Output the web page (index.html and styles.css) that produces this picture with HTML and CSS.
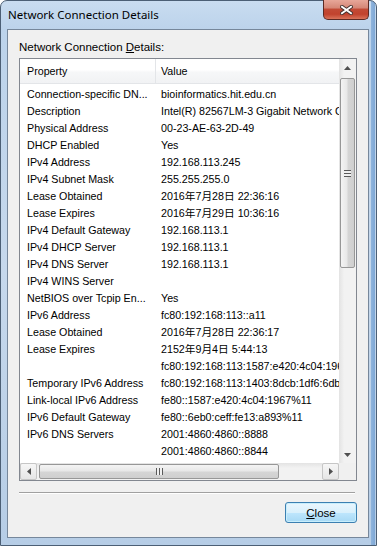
FILE: index.html
```html
<!DOCTYPE html>
<html lang="en">
<head>
  <meta charset="UTF-8" />
  <title>Network Connection Details</title>
  <link rel="stylesheet" href="styles.css">
</head>
<body>

<div class="window">
  <div class="titlebar">
    <span class="title">Network Connection Details</span>
    <div class="close-x">
      <svg width="13" height="10" viewBox="0 0 13 10">
        <path d="M2 1.8 L11 8.2 M11 1.8 L2 8.2" stroke="#43302d" stroke-width="3.8" stroke-linecap="square"/>
        <path d="M2 1.8 L11 8.2 M11 1.8 L2 8.2" stroke="#ffffff" stroke-width="2" stroke-linecap="square"/>
      </svg>
    </div>
  </div>

  <div class="client">
    <div class="caption">Network Connection <u>D</u>etails:</div>

    <div class="listview">
      <div class="list-body">
        <div class="list-head">
          <div class="col-prop">Property</div>
          <div class="col-val">Value</div>
        </div>
        <div class="row"><div class="col-prop">Connection-specific DN...</div><div class="col-val">bioinformatics.hit.edu.cn</div></div>
        <div class="row"><div class="col-prop">Description</div><div class="col-val">Intel(R) 82567LM-3 Gigabit Network Connection</div></div>
        <div class="row"><div class="col-prop">Physical Address</div><div class="col-val">00-23-AE-63-2D-49</div></div>
        <div class="row"><div class="col-prop">DHCP Enabled</div><div class="col-val">Yes</div></div>
        <div class="row"><div class="col-prop">IPv4 Address</div><div class="col-val">192.168.113.245</div></div>
        <div class="row"><div class="col-prop">IPv4 Subnet Mask</div><div class="col-val">255.255.255.0</div></div>
        <div class="row"><div class="col-prop">Lease Obtained</div><div class="col-val">2016年7月28日 22:36:16</div></div>
        <div class="row"><div class="col-prop">Lease Expires</div><div class="col-val">2016年7月29日 10:36:16</div></div>
        <div class="row"><div class="col-prop">IPv4 Default Gateway</div><div class="col-val">192.168.113.1</div></div>
        <div class="row"><div class="col-prop">IPv4 DHCP Server</div><div class="col-val">192.168.113.1</div></div>
        <div class="row"><div class="col-prop">IPv4 DNS Server</div><div class="col-val">192.168.113.1</div></div>
        <div class="row"><div class="col-prop">IPv4 WINS Server</div><div class="col-val"></div></div>
        <div class="row"><div class="col-prop">NetBIOS over Tcpip En...</div><div class="col-val">Yes</div></div>
        <div class="row"><div class="col-prop">IPv6 Address</div><div class="col-val">fc80:192:168:113::a11</div></div>
        <div class="row"><div class="col-prop">Lease Obtained</div><div class="col-val">2016年7月28日 22:36:17</div></div>
        <div class="row"><div class="col-prop">Lease Expires</div><div class="col-val">2152年9月4日 5:44:13</div></div>
        <div class="row"><div class="col-prop"></div><div class="col-val">fc80:192:168:113:1587:e420:4c04:1967</div></div>
        <div class="row"><div class="col-prop">Temporary IPv6 Address</div><div class="col-val">fc80:192:168:113:1403:8dcb:1df6:6db2</div></div>
        <div class="row"><div class="col-prop">Link-local IPv6 Address</div><div class="col-val">fe80::1587:e420:4c04:1967%11</div></div>
        <div class="row"><div class="col-prop">IPv6 Default Gateway</div><div class="col-val">fe80::6eb0:ceff:fe13:a893%11</div></div>
        <div class="row"><div class="col-prop">IPv6 DNS Servers</div><div class="col-val">2001:4860:4860::8888</div></div>
        <div class="row"><div class="col-prop"></div><div class="col-val">2001:4860:4860::8844</div></div>
      </div>

      <div class="vscroll">
        <div class="sb-btn">
          <svg width="7" height="4" viewBox="0 0 7 4"><path d="M0 4 L3.5 0 L7 4 Z" fill="#505050"/></svg>
        </div>
        <div class="vthumb"><span class="grip-h"></span></div>
        <div class="sb-fill"></div>
        <div class="sb-btn">
          <svg width="7" height="4" viewBox="0 0 7 4"><path d="M0 0 L7 0 L3.5 4 Z" fill="#505050"/></svg>
        </div>
      </div>

      <div class="hscroll">
        <div class="sb-btn framed">
          <svg width="4" height="7" viewBox="0 0 4 7"><path d="M4 0 L4 7 L0 3.5 Z" fill="#505050"/></svg>
        </div>
        <div class="hthumb"><span class="grip-v"></span></div>
        <div class="sb-fill"></div>
        <div class="sb-btn framed">
          <svg width="4" height="7" viewBox="0 0 4 7"><path d="M0 0 L4 3.5 L0 7 Z" fill="#505050"/></svg>
        </div>
      </div>

      <div class="corner"></div>
    </div>

    <div class="separator"></div>

    <div class="actions">
      <button class="btn-close"><u>C</u>lose</button>
    </div>
  </div>
</div>

</body>
</html>
```

FILE: styles.css
```css
* { box-sizing: border-box; }

body {
  margin: 0;
  background: #ffffff;
  font-family: "Liberation Sans", Arial, sans-serif;
  font-size: 11px;
  color: #000;
}

.window {
  width: 377px;
  height: 546px;
  display: flex;
  flex-direction: column;
  border: 1px solid #4c5f75;
  border-radius: 7px 7px 0 0;
  background:
    linear-gradient(to right, transparent 370px, #8fb4dc 370px, #7fa8d6 374px, transparent 374px),
    linear-gradient(to bottom, #c9dcf0 0, #bcd3eb 28px, #c6d8ec 50%, #b6cde6 100%);
}

.titlebar {
  height: 28px;
  display: flex;
  align-items: flex-start;
}
.title {
  font-family: "Noto Sans", sans-serif;
  font-size: 11.5px;
  padding: 6px 0 0 7px;
  line-height: 16px;
  color: #000;
}
.close-x {
  margin-left: auto;
  margin-right: 7px;
  margin-top: -1px;
  width: 46px;
  height: 20px;
  border: 1px solid #5b2a24;
  border-top: none;
  border-radius: 0 0 5px 5px;
  background: linear-gradient(to bottom, #e7a799 0, #d68878 40%, #c24a35 50%, #c1432e 75%, #d9735a 100%);
  display: flex;
  align-items: center;
  justify-content: center;
}

.client {
  flex: 1;
  margin: 0 7px 7px 6px;
  border: 1px solid #76879b;
  background: #f0f0f0;
  padding: 10px 11px 0 11px;
  display: flex;
  flex-direction: column;
}

.caption {
  font-size: 11.5px;
  line-height: 15px;
  margin-bottom: 3px;
}

.listview {
  height: 423px;
  border: 1px solid #828790;
  background: #fff;
  display: grid;
  grid-template-columns: 1fr 17px;
  grid-template-rows: 1fr 17px;
}

.list-body {
  overflow: hidden;
  white-space: nowrap;
  font-size: 10.7px;
}
.list-head {
  display: flex;
  height: 25px;
  line-height: 24px;
  background: linear-gradient(to bottom, #ffffff 0, #ffffff 45%, #f6f7f8 55%, #f1f2f4 100%);
  border-bottom: 1px solid #e3e5e8;
  margin-bottom: 2px;
}
.list-head .col-prop {
  border-right: 1px solid #e3e5e8;
}
.row {
  display: flex;
  height: 17px;
  line-height: 17px;
}
.col-prop {
  flex: none;
  width: 136px;
  padding-left: 7px;
  overflow: hidden;
}
.col-val {
  padding-left: 5px;
  font-family: "Liberation Sans", "Noto Sans CJK SC", sans-serif;
}

.vscroll {
  display: flex;
  flex-direction: column;
  background: linear-gradient(to right, #e3e3e3, #f2f2f2 30%, #f2f2f2);
}
.hscroll {
  display: flex;
  background: linear-gradient(to bottom, #e3e3e3, #f2f2f2 30%, #f2f2f2);
}
.sb-btn {
  flex: none;
  width: 17px;
  height: 17px;
  display: flex;
  align-items: center;
  justify-content: center;
}
.sb-btn.framed {
  border: 1px solid #c6c6c6;
  border-radius: 2px;
  background: linear-gradient(to bottom, #f6f6f6, #e6e6e6);
}
.sb-fill { flex: 1; }

.vthumb {
  margin: 2px 1px 0 1px;
  height: 190px;
  border: 1px solid #979797;
  border-radius: 2px;
  background: linear-gradient(to right, #f4f4f4, #e8e8e8 45%, #d5d5d5 55%, #cfcfcf);
  display: flex;
  align-items: center;
  justify-content: center;
}
.hthumb {
  margin: 1px 0 1px 2px;
  width: 240px;
  border: 1px solid #979797;
  border-radius: 2px;
  background: linear-gradient(to bottom, #f4f4f4, #e8e8e8 45%, #d5d5d5 55%, #cfcfcf);
  display: flex;
  align-items: center;
  justify-content: center;
}
.grip-h {
  width: 7px;
  height: 7px;
  background: repeating-linear-gradient(to bottom, #5a5a5a 0, #5a5a5a 1px, #f0f0f0 1px, #f0f0f0 3px);
}
.grip-v {
  width: 7px;
  height: 7px;
  background: repeating-linear-gradient(to right, #5a5a5a 0, #5a5a5a 1px, #f0f0f0 1px, #f0f0f0 3px);
}
.corner { background: #f0f0f0; }

.separator {
  margin: 11px 2px 0 0;
  border-top: 1px solid #a0a0a0;
  border-bottom: 1px solid #ffffff;
}

.actions {
  display: flex;
  justify-content: flex-end;
  margin-top: 8px;
}
.btn-close {
  width: 72px;
  height: 21px;
  padding: 0;
  border: 1px solid #3c7fb1;
  border-radius: 3px;
  box-shadow: inset 0 0 0 1px #c8eefc;
  background: linear-gradient(to bottom, #eaf6fd 0, #d9f0fc 50%, #bee6fd 51%, #a7d9f5 100%);
  font-family: "Liberation Sans", Arial, sans-serif;
  font-size: 11.5px;
  color: #000;
}
```
